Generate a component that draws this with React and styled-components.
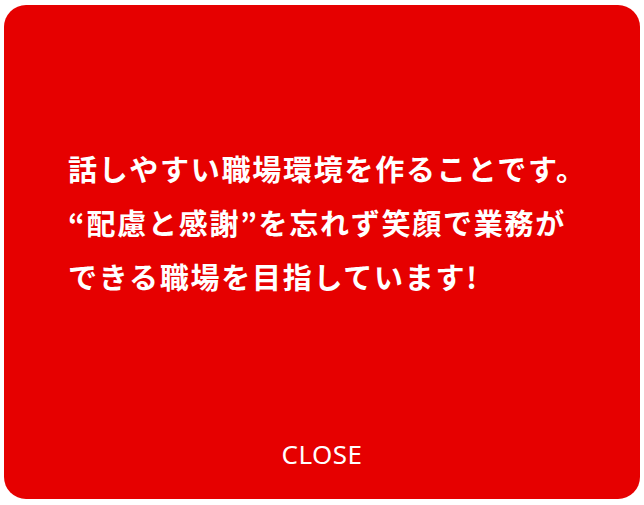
import React from 'react';
import styled, { createGlobalStyle } from 'styled-components';

const GlobalStyle = createGlobalStyle`
	html, body {
		margin: 0;
		padding: 0;
		background: #ffffff;
	}
	body {
		font-family: "Noto Sans", "Noto Sans CJK JP", sans-serif;
	}
`;

const Modal = styled.div`
	box-sizing: border-box;
	margin: 5px 4px 0;
	height: 494px;
	border-radius: 22px;
	background: #e60000;
	display: flex;
	flex-direction: column;
	padding: 136px 0 30px;
`;

const Message = styled.p`
	margin: 0;
	padding-left: 64px;
	white-space: nowrap;
	color: #ffffff;
	font-family: "Noto Sans CJK JP", "Noto Sans", sans-serif;
	font-weight: 700;
	font-size: 29px;
	line-height: 54px;
	letter-spacing: 1.75px;
	text-align: left;
`;

const CloseButton = styled.button`
	margin-top: auto;
	align-self: center;
	background: transparent;
	border: none;
	padding: 0;
	color: #ffffff;
	font-family: "Noto Sans", sans-serif;
	font-weight: 400;
	font-size: 26px;
	line-height: 30px;
	letter-spacing: 0.5px;
	cursor: pointer;
`;

export default function App() {
	return (
		<>
			<GlobalStyle />
			<Modal>
				<Message>
					話しやすい職場環境を作ることです。
					<br />
					“配慮と感謝”を忘れず笑顔で業務が
					<br />
					できる職場を目指しています!
				</Message>
				<CloseButton type="button">CLOSE</CloseButton>
			</Modal>
		</>
	);
}
